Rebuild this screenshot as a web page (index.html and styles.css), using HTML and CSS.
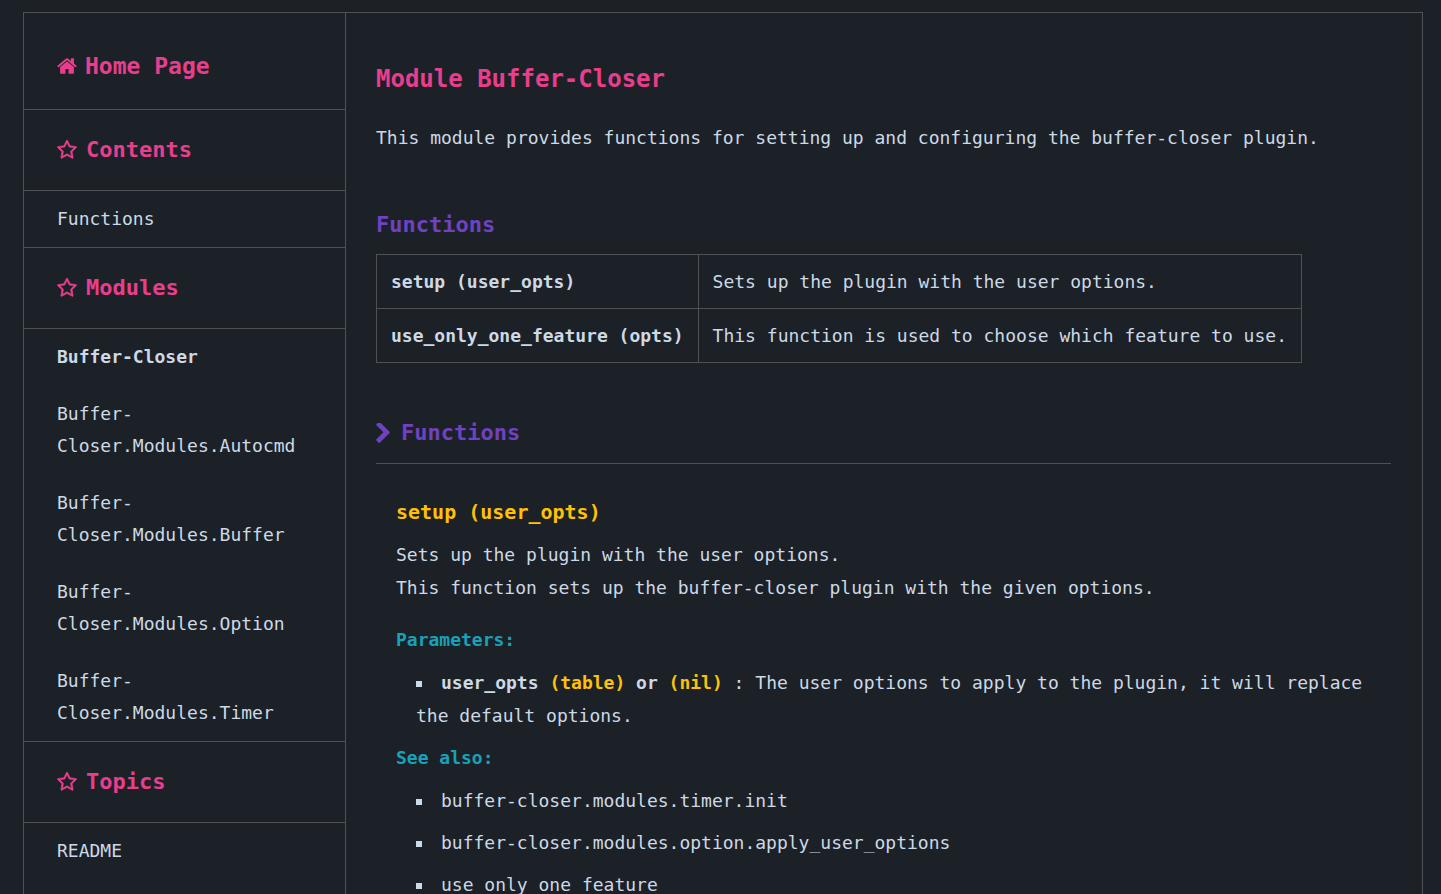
FILE: index.html
```html
<!DOCTYPE html>
<html lang="en">
<head>
<meta charset="utf-8">
<meta name="viewport" content="width=device-width, initial-scale=1">
<title>Buffer-Closer Docs</title>
<link rel="stylesheet" href="styles.css">
</head>
<body>
<svg class="sprite" aria-hidden="true">
  <symbol id="home" viewBox="64 0 1664 1792"><path d="M1472 992v480q0 26-19 45t-45 19h-384v-384h-256v384h-384q-26 0-45-19t-19-45v-480q0-1 .5-3t.5-3l575-474 575 474q1 2 1 6zm223-69l-62 74q-8 9-21 11h-3q-13 0-21-7l-692-577-692 577q-12 8-24 7-13-2-21-11l-62-74q-8-10-7-23.5t11-21.5l719-599q32-26 76-26t76 26l244 204v-195q0-14 9-23t23-9h192q14 0 23 9t9 23v408l219 182q10 8 11 21.5t-7 23.5z"/></symbol>
  <symbol id="star" viewBox="34 0 1724 1792"><path d="M1201 1004l306-297-422-62-189-382-189 382-422 62 306 297-73 421 378-199 377 199zm527-357q0 22-26 48l-363 354 86 500q1 7 1 20 0 50-41 50-19 0-40-12l-449-236-449 236q-22 12-40 12-21 0-31.5-14.5t-10.5-35.5q0-6 2-20l86-500-364-354q-25-27-25-48 0-37 56-46l502-73 225-455q19-41 49-41t49 41l225 455 502 73q56 9 56 46z"/></symbol>
  <symbol id="chevron" viewBox="346 122 1036 1516"><path d="M1363 877l-742 742q-19 19-45 19t-45-19l-166-166q-19-19-19-45t19-45l531-531-531-531q-19-19-19-45t19-45l166-166q19-19 45-19t45 19l742 742q19 19 19 45t-19 45z"/></symbol>
</svg>
<div class="page">
  <nav class="sidebar">
    <h1 class="side-title side-home"><svg class="icon" aria-hidden="true"><use href="#home"/></svg><a href="#top">Home Page</a></h1>
    <h2 class="side-title"><svg class="icon icon-star" aria-hidden="true"><use href="#star"/></svg>Contents</h2>
    <ul class="side-list">
      <li><a href="#functions">Functions</a></li>
    </ul>
    <h2 class="side-title"><svg class="icon icon-star" aria-hidden="true"><use href="#star"/></svg>Modules</h2>
    <ul class="side-list">
      <li><strong>Buffer-Closer</strong></li>
      <li><a href="#autocmd">Buffer-Closer.Modules.Autocmd</a></li>
      <li><a href="#buffer">Buffer-Closer.Modules.Buffer</a></li>
      <li><a href="#option">Buffer-Closer.Modules.Option</a></li>
      <li><a href="#timer">Buffer-Closer.Modules.Timer</a></li>
    </ul>
    <h2 class="side-title"><svg class="icon icon-star" aria-hidden="true"><use href="#star"/></svg>Topics</h2>
    <ul class="side-list">
      <li><a href="#readme">README</a></li>
    </ul>
  </nav>
  <main class="content" id="top">
    <h1 class="title">Module Buffer-Closer</h1>
    <p class="intro">This module provides functions for setting up and configuring the buffer-closer plugin.</p>
    <h2 class="heading">Functions</h2>
    <table class="summary">
      <tbody>
        <tr><th scope="row"><a href="#setup">setup (user_opts)</a></th><td>Sets up the plugin with the user options.</td></tr>
        <tr><th scope="row"><a href="#use_only_one_feature">use_only_one_feature (opts)</a></th><td>This function is used to choose which feature to use.</td></tr>
      </tbody>
    </table>
    <h2 class="heading section" id="functions"><svg class="chevron" aria-hidden="true"><use href="#chevron"/></svg>Functions</h2>
    <section class="entry" id="setup">
      <h3 class="entry-name">setup (user_opts)</h3>
      <p class="text">Sets up the plugin with the user options.<br>This function sets up the buffer-closer plugin with the given options.</p>
      <h4 class="label label-first">Parameters:</h4>
      <ul class="bullets">
        <li><strong>user_opts <span class="type">(table)</span> or <span class="type">(nil)</span></strong> : The user options to apply to the plugin, it will replace the default options.</li>
      </ul>
      <h4 class="label">See also:</h4>
      <ul class="bullets">
        <li><a href="#timer">buffer-closer.modules.timer.init</a></li>
        <li><a href="#option">buffer-closer.modules.option.apply_user_options</a></li>
        <li><a href="#use_only_one_feature">use_only_one_feature</a></li>
      </ul>
    </section>
  </main>
</div>
</body>
</html>
```
FILE: styles.css
```css
* {
  box-sizing: border-box;
}

body {
  margin: 0;
  padding: 12px 18px 12px 23px;
  background: #1c2128;
  color: #cdd9e5;
  font: 18px/32px "DejaVu Sans Mono", monospace;
}

h1, h2, h3, h4, p, ul {
  margin: 0;
  padding: 0;
}

a {
  color: inherit;
  text-decoration: none;
}

.sprite {
  position: absolute;
  width: 0;
  height: 0;
}

.page {
  display: flex;
  border: 1px solid #4f5154;
}

.sidebar {
  flex: 0 0 322px;
  border-right: 1px solid #4f5154;
}

.side-title {
  display: flex;
  align-items: center;
  gap: 9px;
  padding: 24px 33px;
  border-bottom: 1px solid #4f5154;
  color: #e83e8c;
  font-size: 22px;
}

.side-home {
  gap: 8px;
  padding: 37px 33px 27px;
  font-size: 23px;
}

.icon {
  width: 20px;
  height: 22px;
  fill: currentColor;
}

.icon-star {
  stroke: currentColor;
  stroke-width: 50;
}

.side-list {
  display: flex;
  flex-direction: column;
  gap: 25px;
  padding: 12px 33px;
  border-bottom: 1px solid #4f5154;
  list-style: none;
}

.side-list:last-child {
  border-bottom: 0;
}

.content {
  flex: 1;
  min-width: 0;
  padding: 50px 31px 50px 30px;
}

.title {
  color: #e83e8c;
  font-size: 24px;
}

.intro {
  margin-top: 27px;
}

.heading {
  margin-top: 55px;
  color: #6f42c1;
  font-size: 22px;
}

.summary {
  margin-top: 13px;
  border-collapse: collapse;
}

.summary th,
.summary td {
  padding: 11px 14px 10px;
  border: 1px solid #4f5154;
  text-align: left;
}

.section {
  display: flex;
  align-items: center;
  gap: 11px;
  margin-top: 54px;
  padding-bottom: 14px;
  border-bottom: 1px solid #4f5154;
}

.chevron {
  width: 14px;
  height: 20px;
  fill: currentColor;
}

.entry {
  padding: 32px 20px 0;
}

.entry-name {
  color: #ffc107;
  font-size: 20px;
}

.text {
  margin-top: 10px;
  line-height: 33px;
}

.label {
  margin-top: 10px;
  color: #17a2b8;
  font-size: 18px;
}

.label-first {
  margin-top: 20px;
}

.bullets {
  display: flex;
  flex-direction: column;
  gap: 9px;
  margin-top: 10px;
  padding-left: 20px;
  line-height: 33px;
  list-style: square inside;
}

.type {
  color: #ffc107;
}
```
